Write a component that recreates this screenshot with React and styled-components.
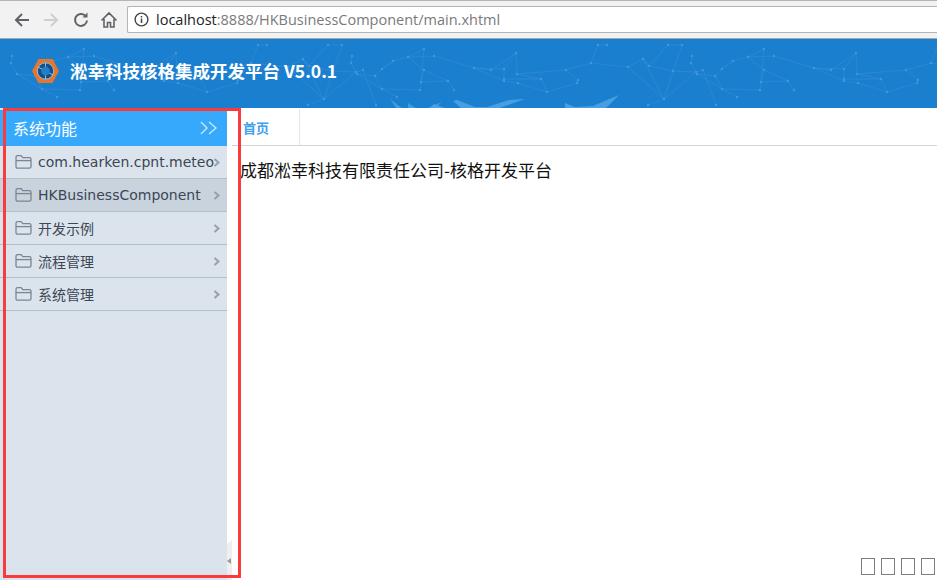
import styled, { createGlobalStyle } from "styled-components";

const GlobalStyle = createGlobalStyle`
  html, body { margin: 0; padding: 0; height: 100%; overflow: hidden; background: #fff; }
  body { font-family: "Noto Sans CJK SC", "Liberation Sans", sans-serif; }
`;

const Page = styled.div`
  position: relative;
  display: flex;
  flex-direction: column;
  width: 937px;
  height: 580px;
  overflow: hidden;
`;

const BrowserBar = styled.div`
  display: flex;
  align-items: center;
  height: 39px;
  box-sizing: border-box;
  padding: 0 0 0 13px;
  background: #f2f2f2;
  border-top: 1px solid #b5b5b5;
  border-bottom: 1px solid #a8a8a8;
`;

const NavIcon = styled.svg`
  width: 18px;
  height: 18px;
  margin-right: ${(p) => p.$gap}px;
  fill: none;
  stroke: ${(p) => p.$color};
  stroke-width: 2;
  flex-shrink: 0;
`;

const AddressBox = styled.div`
  display: flex;
  align-items: center;
  flex: 1;
  height: 27px;
  box-sizing: border-box;
  padding-left: 6px;
  background: #fff;
  border: 1px solid #b4b4b4;
  border-right: none;
  border-radius: 2px 0 0 2px;
  font-family: "Open Sans", "Liberation Sans", sans-serif;
  font-size: 14.5px;
  color: #7a7a7a;
`;

const Host = styled.span`
  color: #222;
`;

const Banner = styled.div`
  position: relative;
  display: flex;
  align-items: center;
  height: 69px;
  flex-shrink: 0;
  padding: 0 0 6px 31px;
  box-sizing: border-box;
  gap: 10px;
  background: #1b7fd0;
  overflow: hidden;
`;

const BannerArt = styled.svg`
  position: absolute;
  left: 0;
  top: 0;
  width: 937px;
  height: 69px;
`;

const Logo = styled.svg`
  position: relative;
  width: 29px;
  height: 26px;
  flex-shrink: 0;
`;

const Title = styled.div`
  position: relative;
  font-family: "Noto Sans CJK SC", sans-serif;
  font-size: 17.5px;
  font-weight: 700;
  color: #fff;
  white-space: nowrap;
`;

const Main = styled.div`
  display: flex;
  flex: 1;
  min-height: 0;
`;

const Sidebar = styled.div`
  display: flex;
  flex-direction: column;
  width: 227px;
  flex-shrink: 0;
  background: #dbe4ec;
  padding-top: 2px;
`;

const SideHeader = styled.div`
  display: flex;
  align-items: center;
  justify-content: space-between;
  height: 36px;
  flex-shrink: 0;
  box-sizing: border-box;
  padding: 0 9px 0 13px;
  background: #36a9fc;
  color: #fff;
  font-size: 16px;
`;

const Row = styled.div`
  position: relative;
  display: flex;
  align-items: center;
  gap: 6px;
  height: 33px;
  flex-shrink: 0;
  box-sizing: border-box;
  padding: 0 0 1px 15px;
  background: ${(p) => (p.$active ? "#c9d3dd" : "#dbe4ec")};
  border-bottom: 1px solid #b4c0c4;
  color: #3c4656;
  font-family: "DejaVu Sans", "Noto Sans CJK SC", sans-serif;
  font-size: 14px;
  white-space: nowrap;
  overflow: hidden;
`;

const FolderIcon = styled.svg`
  width: 17px;
  height: 15px;
  flex-shrink: 0;
  fill: none;
  stroke: #7b8593;
  stroke-width: 1.3;
`;

const Chevron = styled.svg`
  position: absolute;
  right: 6px;
  top: 12px;
  width: 8px;
  height: 9px;
  fill: none;
  stroke: #97a0a8;
  stroke-width: 2;
`;

const Splitter = styled.div`
  position: relative;
  width: 5px;
  flex-shrink: 0;
`;

const SplitterHandle = styled.div`
  position: absolute;
  left: 0;
  bottom: 0;
  width: 5px;
  height: 40px;
  background: #efefef;
  clip-path: polygon(0 4px, 100% 0, 100% 100%, 0 100%);
`;

const SplitterArrow = styled.div`
  position: absolute;
  left: 0;
  bottom: 16px;
  width: 0;
  height: 0;
  border-top: 3.5px solid transparent;
  border-bottom: 3.5px solid transparent;
  border-right: 4px solid #999;
`;

const Content = styled.div`
  display: flex;
  flex-direction: column;
  flex: 1;
`;

const TabBar = styled.div`
  display: flex;
  height: 38px;
  flex-shrink: 0;
  box-sizing: border-box;
  border-bottom: 1px solid #d4d4d4;
`;

const Tab = styled.div`
  display: flex;
  align-items: center;
  width: 68px;
  height: 36px;
  margin-top: 1px;
  box-sizing: border-box;
  padding-left: 11px;
  border-right: 1px solid #e6e6e6;
  color: #3d9ff0;
  font-size: 13px;
  font-weight: 700;
`;

const Body = styled.div`
  padding: 12px 0 0 8px;
  font-size: 17px;
  line-height: 24px;
  color: #111;
`;

/* red annotation drawn over the screenshot */
const Annotation = styled.div`
  position: absolute;
  left: 3px;
  top: 108px;
  width: 238px;
  height: 470px;
  box-sizing: border-box;
  border: 3px solid #fb3a3c;
  pointer-events: none;
`;

const TofuRow = styled.div`
  position: absolute;
  right: 2px;
  bottom: 5px;
  display: flex;
  gap: 6px;
`;

const Tofu = styled.div`
  width: 14px;
  height: 17px;
  box-sizing: border-box;
  border: 1px solid #7d7d7d;
`;

const Folder = () => (
  <FolderIcon viewBox="0 0 17 15">
    <path d="M1 3.2c0-1 .6-1.6 1.6-1.6h3.6l1.6 2h6.6c1 0 1.6.6 1.6 1.6v7.4c0 1-.6 1.6-1.6 1.6H2.6c-1 0-1.6-.6-1.6-1.6z" />
    <path d="M1 6.6h15" />
  </FolderIcon>
);

const menu = [
  { label: "com.hearken.cpnt.meteo" },
  { label: "HKBusinessComponent", active: true },
  { label: "开发示例" },
  { label: "流程管理" },
  { label: "系统管理" },
];

const netPoints = [
  [12, 17], [11, 24], [17, 35], [35, 37], [42, 30], [53, 22], [68, 18], [84, 10], [94, 17], [84, 31],
  [81, 43], [108, 42], [80, 51], [42, 50], [57, 58], [114, 51], [134, 29], [151, 31], [164, 30], [176, 14],
  [177, 35], [164, 40], [164, 42], [178, 44], [201, 40], [207, 53], [237, 44], [238, 41], [226, 31], [251, 24],
  [258, 6], [267, 6], [288, 28], [303, 20], [309, 27], [328, 6], [342, 6], [333, 32], [356, 33], [363, 31],
  [324, 60], [308, 66], [376, 66],
];
const netLinks = [
  [0, 1], [1, 2], [2, 3], [3, 4], [4, 5], [5, 6], [6, 7], [6, 8], [8, 16], [6, 9], [9, 10], [10, 11], [10, 12], [12, 13],
  [13, 14], [3, 13], [11, 15], [9, 11], [16, 17], [16, 18], [17, 19], [18, 19], [19, 20], [18, 21], [21, 22], [22, 23],
  [20, 24], [24, 25], [23, 25], [25, 26], [26, 27], [27, 28], [28, 20], [28, 29], [29, 30], [30, 31], [29, 32], [32, 33],
  [33, 34], [34, 35], [35, 36], [36, 37], [37, 38], [38, 39], [34, 37], [32, 40], [40, 37], [40, 41], [40, 38], [39, 42],
  [5, 4], [16, 22], [21, 24], [2, 13], [7, 10], [34, 33], [33, 40],
];

const Network = ({ dx }) => (
  <g transform={`translate(${dx} 0)`}>
    {netLinks.map(([a, b], i) => (
      <line key={i} x1={netPoints[a][0]} y1={netPoints[a][1]} x2={netPoints[b][0]} y2={netPoints[b][1]} stroke="#3f94da" strokeWidth="0.6" opacity="0.7" />
    ))}
    {netPoints.map(([x, y], i) => (
      <circle key={i} cx={x} cy={y} r="1.2" fill="#4a9be0" opacity="0.8" />
    ))}
  </g>
);

export default function App() {
  return (
    <>
      <GlobalStyle />
      <Page>
        <BrowserBar>
          <NavIcon viewBox="0 0 18 18" $color="#5f6368" $gap={11}>
            <path d="M16 9H3M9 3L3 9l6 6" />
          </NavIcon>
          <NavIcon viewBox="0 0 18 18" $color="#cfcfcf" $gap={12}>
            <path d="M2 9h13M9 3l6 6-6 6" />
          </NavIcon>
          <NavIcon viewBox="0 0 18 18" $color="#5f6368" $gap={10}>
            <path d="M15 9.5A6 6 0 1 1 13.2 4.6" />
            <path d="M15.5 1.5v5h-5" fill="#5f6368" stroke="none" />
          </NavIcon>
          <NavIcon viewBox="0 0 18 18" $color="#5f6368" $gap={9} style={{ strokeWidth: 1.6 }}>
            <path d="M1.5 9.5L9 2l7.5 7.5M4 8v8h3.5v-4.5h3V16H14V8" />
          </NavIcon>
          <AddressBox>
            <svg width="15" height="15" viewBox="0 0 15 15" style={{ marginRight: 7, flexShrink: 0 }}>
              <circle cx="7.5" cy="7.5" r="6.4" fill="none" stroke="#444" strokeWidth="1.4" />
              <path d="M7.5 6.6v4.4M7.5 4v1.6" stroke="#444" strokeWidth="1.5" />
            </svg>
            <Host>localhost</Host>:8888/HKBusinessComponent/main.xhtml
          </AddressBox>
        </BrowserBar>

        <Banner>
          <BannerArt viewBox="0 0 937 69">
            <Network dx={0} />
            <Network dx={340} />
            <Network dx={680} />
            <g fill="#4aa3e2">
              <path d="M434 65l14 5h-20zM461 69l-8-7 4-1 18 7h12l22-7 16-1-28 10z" opacity="0.9" />
              <path d="M390 60l12 9h-6zM408 64l8 5h12l14-6-8 7h-26z" opacity="0.8" />
              <path d="M565 64l10 4 18-1 26-11-14 14h-40z" opacity="0.9" />
            </g>
          </BannerArt>
          <Logo viewBox="0 0 29 26">
            <path d="M7.5 1h14L28 13l-6.5 12h-14L1 13z" fill="#e8762a" />
            <circle cx="14.5" cy="13" r="8.2" fill="#134f86" stroke="#8fc0e0" strokeWidth="1" />
            <path d="M14.5 5v16M7 9l15 8" stroke="#dfe9f2" strokeWidth="0.7" />
            <circle cx="14.5" cy="13" r="4.4" fill="#1f7fc8" />
          </Logo>
          <Title>淞幸科技核格集成开发平台 V5.0.1</Title>
        </Banner>

        <Main>
          <Sidebar>
            <SideHeader>
              系统功能
              <svg width="18" height="14" viewBox="0 0 18 14" fill="none" stroke="#cfe9fe" strokeWidth="1.3">
                <path d="M1 1l6 6-6 6M9 1l7 6-7 6" />
              </svg>
            </SideHeader>
            {menu.map((item) => (
              <Row key={item.label} $active={item.active}>
                <Folder />
                {item.label}
                <Chevron viewBox="0 0 8 9">
                  <path d="M1.5 1l4 3.5-4 3.5" />
                </Chevron>
              </Row>
            ))}
          </Sidebar>
          <Splitter>
            <SplitterHandle />
            <SplitterArrow />
          </Splitter>
          <Content>
            <TabBar>
              <Tab>首页</Tab>
            </TabBar>
            <Body>成都淞幸科技有限责任公司-核格开发平台</Body>
          </Content>
        </Main>

        <Annotation />
        <TofuRow>
          <Tofu />
          <Tofu />
          <Tofu />
          <Tofu />
        </TofuRow>
      </Page>
    </>
  );
}
